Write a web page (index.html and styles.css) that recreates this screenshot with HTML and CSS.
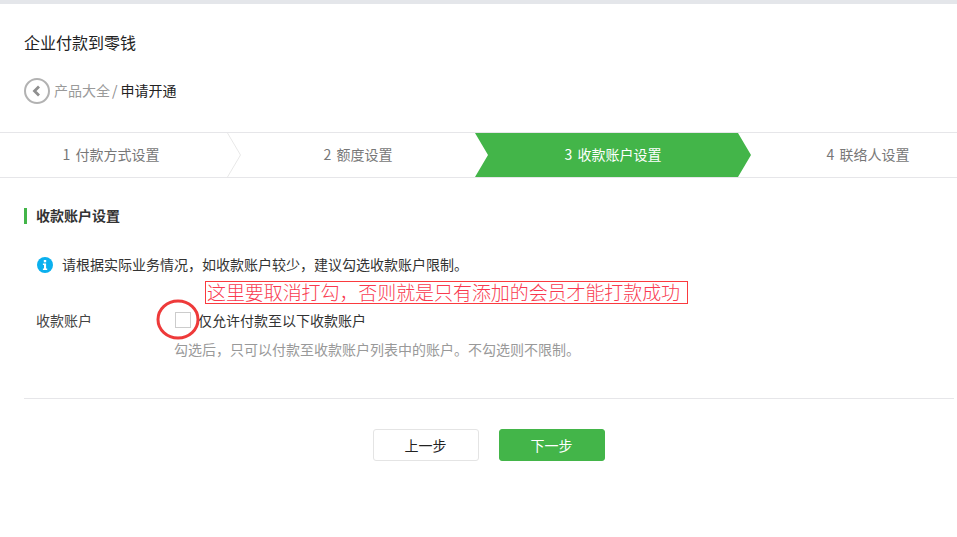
FILE: index.html
```
<!DOCTYPE html>
<html lang="zh-CN">
<head>
<meta charset="utf-8">
<title>企业付款到零钱</title>
<link rel="stylesheet" href="styles.css">
</head>
<body>
<div class="page">
  <header class="header">
    <h1 class="title">企业付款到零钱</h1>
    <nav class="crumbs">
      <svg class="back" width="27" height="27" viewBox="0 0 27 27"><circle cx="13" cy="13" r="12" fill="none" stroke="#b2b2b2" stroke-width="2"/><path d="M15 8.5 10.5 13 15 17.5" fill="none" stroke="#8f8f8f" stroke-width="2.8"/></svg>
      <span class="crumb-link">产品大全</span><span class="crumb-sep">/</span><span class="crumb-current">申请开通</span>
    </nav>
  </header>
  <div class="steps">
    <div class="step step-1">1 付款方式设置
      <svg class="chev" width="14" height="44" viewBox="0 0 14 44"><path d="M0.5 0 13.5 22 0.5 44" fill="none" stroke="#e8e8e8"/></svg>
    </div>
    <div class="step step-2">2 额度设置</div>
    <div class="step step-3">3 收款账户设置</div>
    <div class="step step-4">4 联络人设置</div>
  </div>
  <main class="content">
    <h2 class="section-title">收款账户设置</h2>
    <div class="notice">
      <svg class="info" width="16" height="16" viewBox="0 0 16 16"><circle cx="8" cy="8" r="8" fill="#0bb0ee"/><rect x="6.8" y="3" width="2.4" height="2.3" fill="#fff"/><path d="M5.9 6.6H9.1V11.6H10.2V13H5.9V11.6H7V8H5.9Z" fill="#fff"/></svg>
      <span class="notice-text">请根据实际业务情况，如收款账户较少，建议勾选收款账户限制。</span>
    </div>
    <div class="form-row">
      <span class="form-label">收款账户</span>
      <div class="form-field">
        <label class="check"><span class="box"></span><span>仅允许付款至以下收款账户</span></label>
        <p class="hint">勾选后，只可以付款至收款账户列表中的账户。不勾选则不限制。</p>
      </div>
    </div>
    <div class="actions">
      <button class="btn btn-default">上一步</button>
      <button class="btn btn-primary">下一步</button>
    </div>
  </main>
  <div class="note">这里要取消打勾，否则就是只有添加的会员才能打款成功</div>
  <svg class="ring" width="46" height="42" viewBox="0 0 46 42"><ellipse cx="22" cy="20.5" rx="20" ry="18.5" fill="none" stroke="#ee3a3a" stroke-width="3"/></svg>
</div>
</body>
</html>
```
FILE: styles.css
```
* { box-sizing: border-box; }
html, body { margin: 0; padding: 0; }
body {
  background: #fff;
  font-family: "Noto Sans CJK SC", "Liberation Sans", sans-serif;
  font-size: 14px;
  color: #333;
  overflow: hidden;
}
.page {
  position: relative;
  width: 957px;
  height: 537px;
  overflow: hidden;
  border-top: 4px solid #e4e6ea;
}
.header { padding: 28px 24px 0; height: 128px; }
.title {
  margin: 0;
  font-size: 16px;
  font-weight: 400;
  line-height: 20px;
  color: #222;
}
.crumbs {
  display: flex;
  align-items: center;
  margin-top: 26px;
  height: 27px;
  font-size: 14px;
}
.crumbs span { line-height: 25px; padding-bottom: 2px; }
.back { margin-right: 3px; }
.crumb-link { color: #9a9a9a; }
.crumb-sep { color: #8a8a8a; margin: 0 3px 0 2px; }
.crumb-current { color: #222; }
.steps {
  display: flex;
  height: 46px;
  border-top: 1px solid #e6e6e9;
  border-bottom: 1px solid #e6e6e9;
  overflow: hidden;
}
.step {
  position: relative;
  flex: none;
  height: 44px;
  line-height: 42px;
  text-align: center;
  color: #777;
  font-size: 14px;
  word-spacing: 2px;
}
.step-1 { width: 227px; padding-right: 5px; }
.step-2 { width: 248px; padding-left: 14px; }
.step-3 {
  width: 276px;
  color: #fff;
  background: #43b549;
  clip-path: polygon(0 0, 263px 0, 100% 50%, 263px 100%, 0 100%, 13px 50%);
}
.step-4 { width: 234px; }
.chev { position: absolute; left: 100%; top: 0; }
.content { padding: 0 3px 0 24px; }
.section-title {
  margin: 30px 0 0;
  padding-left: 9px;
  border-left: 3px solid #43b549;
  height: 16px;
  line-height: 14px;
  font-size: 14px;
  font-weight: 700;
  color: #333;
}
.notice {
  display: flex;
  align-items: center;
  gap: 9px;
  margin: 31px 0 0 13px;
  height: 20px;
  color: #333;
}
.notice-text { line-height: 18px; padding-bottom: 2px; }
.info { flex: none; }
.form-row { display: flex; margin-top: 35px; padding: 0 0 39px 12px; border-bottom: 1px solid #e6e6e9; }
.form-label { width: 139px; line-height: 20px; color: #444; }
.form-field { flex: 1; }
.check { display: flex; align-items: center; gap: 7px; height: 20px; line-height: 20px; color: #333; }
.box { width: 16px; height: 16px; border: 1px solid #ccc; background: #fff; }
.hint { margin: 9px 0 0 -1px; line-height: 20px; color: #999; }
.actions { display: flex; justify-content: center; gap: 20px; margin-top: 30px; padding-right: 1px; }
.btn {
  width: 106px;
  height: 32px;
  border-radius: 3px;
  font: inherit;
  font-size: 14px;
  padding: 0;
  border: 1px solid #e4e4e4;
  background: #fff;
  color: #222;
}
.btn-primary { background: #43b549; border-color: #43b549; color: #fff; }
.note {
  position: absolute;
  left: 205px;
  top: 277px;
  width: 483px;
  height: 23px;
  border: 1px solid #fa3a3e;
  padding-left: 1px;
  font-size: 19px;
  line-height: 19px;
  font-weight: 300;
  letter-spacing: -0.08px;
  color: #f93a50;
  white-space: nowrap;
}
.ring { position: absolute; left: 156px; top: 295px; }
```
